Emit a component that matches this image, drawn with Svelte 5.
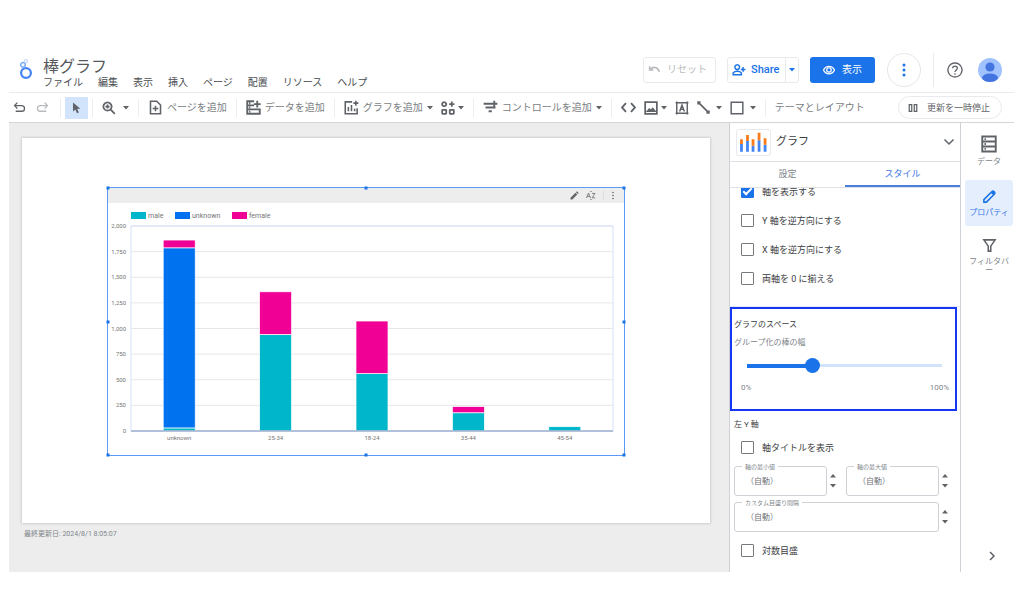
<script lang="ts">
    // stroke icons on a 24x24 grid
    const icons: Record<string, string> = {
        undo: 'M8 3 L3 8.500 L8 14 M3 8.500 H16 A5 5 0 0 1 16 19 H5',
        redo: 'M16 3 L21 8.500 L16 14 M21 8.500 H8 A5 5 0 0 0 8 19 H19',
        reset: 'M3 6 V13 H10 M4 12 C9 6 18 7 21 16',
        zoom: 'M9.500 2.500 A7 7 0 1 1 9.400 2.500 M14.500 14.500 L22 22 M9.500 6 V13 M6 9.500 H13',
        page: 'M4 2 H14 L20 8 V22 H4 Z M12 9 V18 M7.500 13.500 H16.500',
        data: 'M13 2 H2 V22 H22 V15 H2 M2 8.500 H13 M18 1 V12 M12.500 6.500 H23.500 M5 5.200 H7 M5 11.800 H7 M5 18.500 H7',
        chart: 'M13 3 H2 V22 H21 V13 M7 18 V11 M12 18 V8 M17 18 V14 M19 1 V9 M15 5 H23',
        widgets: 'M5.500 2 A3.500 3.500 0 1 1 5.400 2 M3 15 H8 Q9 15 9 16 V21 Q9 22 8 22 H3 Q2 22 2 21 V16 Q2 15 3 15 Z M16 15 H21 Q22 15 22 16 V21 Q22 22 21 22 H16 Q15 22 15 21 V16 Q15 15 16 15 Z M18.500 1 V10 M14 5.500 H23',
        control: 'M1 6 H13 M4 12 H20 M9 18 H14 M18 1 V11 M13 6 H23',
        code: 'M8 5 L1.500 12 L8 19 M16 5 L22.500 12 L16 19',
        image: 'M2 2 H22 V22 H2 Z M6 17.500 L9 14 L12 16.500 L15 13 L18.500 17.500 Z',
        text: 'M3 3 H21 V21 H3 Z M8 18 L12 7 L16 18 M9.500 14 H14.500 M1 3 H5 M3 1 V5 M19 3 H23 M21 1 V5 M1 21 H5 M3 19 V23 M19 21 H23 M21 19 V23',
        line: 'M3 3 L21 21 M2 2 H5 V5 H2 Z M19 19 H22 V22 H19 Z',
        rect: 'M2 2 H22 V22 H2 Z',
        share: 'M9 3 A4 4 0 1 1 8.900 3 M2 20 V17 C5 13 13 13 16 17 V20 Z M19 7 V15 M15 11 H23',
        eye: 'M1 12 C6 2 18 2 23 12 C18 22 6 22 1 12 Z M12 7.500 A4.500 4.500 0 1 1 11.900 7.500',
        help: 'M12 1.500 A10.500 10.500 0 1 1 11.900 1.500 M8.500 9.500 C8.500 5 15.500 5 15.500 9.500 C15.500 12 12 12 12 15 M12 17 V19',
        down: 'M3 7 L12 16 L21 7',
        right: 'M8 4 L16 12 L8 20',
        table: 'M3 2 H21 V22 H3 Z M3 8.700 H21 M3 15.300 H21 M6 5.500 H8 M6 12 H8 M6 18.500 H8',
        pen: 'M3 21 V17 L16 4 C18 2 22 6 20 8 L7 21 Z M15 5 L19 9 M17 4 L20 7 M16 6 L19 6',
        filter: 'M3 3 H21 L14 13 V21 H10 V13 Z',
        pause: 'M3 4 H9 V20 H3 Z M15 4 H21 V20 H15 Z',
    };

    const menus = ['ファイル', '編集', '表示', '挿入', 'ページ', '配置', 'リソース', 'ヘルプ'];

    const series = [
        { name: 'male', color: '#00b6cb', x: 23 },
        { name: 'unknown', color: '#0072f0', x: 67 },
        { name: 'female', color: '#f10096', x: 124 },
    ];

    // one value per series, stacked from the bottom
    const rows = [
        { age: 'unknown', values: [30, 1757, 76] },
        { age: '25-34', values: [942, 0, 416] },
        { age: '18-24', values: [560, 0, 513] },
        { age: '35-44', values: [178, 0, 60] },
        { age: '45-54', values: [42, 0, 0] },
    ];
    const ticks = [0, 250, 500, 750, 1000, 1250, 1500, 1750, 2000];

    const left = 23;
    const right = 505;
    const top = 23;
    const bottom = 228;
    const step = (right - left) / rows.length;

    function y(value: number): number {
        return bottom - (value / 2000) * (bottom - top);
    }

    const bars = rows.flatMap((row, i) => {
        let sum = 0;
        return row.values.map((v, s) => {
            sum += v;
            return { x: left + step * (i + 0.5) - 16, y: y(sum), h: y(0) - y(v), color: series[s].color };
        }).filter((bar) => bar.h > 0);
    });

    let axisOptions = $state([
        { label: '軸を表示する', checked: true },
        { label: 'Y 軸を逆方向にする', checked: false },
        { label: 'X 軸を逆方向にする', checked: false },
        { label: '両軸を 0 に揃える', checked: false },
    ]);
    let showTitle = $state(false);
    let logScale = $state(false);
    let barWidth = $state(32);
    let activeTab = $state('スタイル');
</script>

{#snippet icon(name: string, size: number, weight = 2)}
    <svg class="icon" width={size} height={size} viewBox="0 0 24 24" stroke-width={weight} aria-hidden="true">
        <path d={icons[name]} />
    </svg>
{/snippet}

{#snippet caret()}
    <svg class="caret" width="6" height="4" viewBox="0 0 6 4" aria-hidden="true"><path d="M0 0 H6 L3 3.500 Z" /></svg>
{/snippet}

{#snippet field(id: string, label: string)}
    <div class="field-row">
        <div class="field">
            <label for={id}>{label}</label>
            <input {id} type="text" placeholder="（自動）" />
        </div>
        <div class="spinner">
            <button aria-label="増やす"><svg width="6" height="4" viewBox="0 0 6 4"><path d="M0 3.500 L3 0 L6 3.500 Z" /></svg></button>
            <button aria-label="減らす">{@render caret()}</button>
        </div>
    </div>
{/snippet}

<div class="app">
    <header>
        <svg class="logo" width="14" height="22" viewBox="0 0 14 22" aria-hidden="true">
            <circle cx="7" cy="14" r="4.900" fill="none" stroke="#4285f4" stroke-width="2.200" />
            <circle cx="4" cy="5.800" r="2.300" fill="none" stroke="#7baaf7" stroke-width="1.500" />
            <circle cx="7" cy="2.200" r="1.500" fill="none" stroke="#c6dafc" stroke-width="1.200" />
        </svg>
        <div class="heading">
            <h1>棒グラフ</h1>
            <nav>
                {#each menus as menu}
                    <button>{menu}</button>
                {/each}
            </nav>
        </div>
        <div class="actions">
            <button class="outlined reset" disabled>{@render icon('reset', 13, 3)}リセット</button>
            <div class="outlined split">
                <button class="share">{@render icon('share', 14, 2.5)}Share</button>
                <button class="share-more" aria-label="共有オプション">{@render caret()}</button>
            </div>
            <button class="view">{@render icon('eye', 12, 2.5)}表示</button>
            <button class="more" aria-label="その他">
                <svg width="4" height="14" viewBox="0 0 4 14"><circle cx="2" cy="2" r="1.500" /><circle cx="2" cy="7" r="1.500" /><circle cx="2" cy="12" r="1.500" /></svg>
            </button>
            <div class="account">
                <button aria-label="ヘルプ">{@render icon('help', 16)}</button>
                <button aria-label="アカウント">
                    <svg width="24" height="24" viewBox="0 0 24 24">
                        <clipPath id="round"><circle cx="12" cy="12" r="12" /></clipPath>
                        <g clip-path="url(#round)">
                            <rect width="24" height="24" fill="#a0c3ff" />
                            <circle cx="12" cy="9" r="4.600" fill="#4374e0" />
                            <ellipse cx="12" cy="20" rx="8" ry="4.600" fill="#4374e0" />
                        </g>
                    </svg>
                </button>
            </div>
        </div>
    </header>

    <div class="toolbar">
        <div class="group first">
            <button aria-label="元に戻す">{@render icon('undo', 13, 2.5)}</button>
            <button class="faded" aria-label="やり直す">{@render icon('redo', 13, 2.5)}</button>
        </div>
        <div class="group tight">
            <button class="pointer" aria-label="選択">
                <svg width="9" height="12" viewBox="0 0 9 12"><path d="M1 0.500 V9.500 L3.300 7.400 L5 11.200 L6.800 10.400 L5.200 6.800 H8.400 Z" fill="currentColor" /></svg>
            </button>
        </div>
        <div class="group zoom">
            <button aria-label="ズーム">{@render icon('zoom', 14, 3)}{@render caret()}</button>
        </div>
        <div class="group"><button class="label">{@render icon('page', 15, 2.5)}ページを追加</button></div>
        <div class="group"><button class="label">{@render icon('data', 15, 3)}データを追加</button></div>
        <div class="group">
            <button class="label">{@render icon('chart', 15, 2.5)}グラフを追加{@render caret()}</button>
            <button class="pick" aria-label="コミュニティ">{@render icon('widgets', 14, 3)}{@render caret()}</button>
        </div>
        <div class="group"><button class="label">{@render icon('control', 15, 3)}コントロールを追加{@render caret()}</button></div>
        <div class="group">
            <button aria-label="URL の埋め込み">{@render icon('code', 15, 3)}</button>
            <button class="pick" aria-label="画像">{@render icon('image', 14, 3)}{@render caret()}</button>
            <button aria-label="テキスト">{@render icon('text', 14, 2.5)}</button>
            <button class="pick wide" aria-label="線">{@render icon('line', 13, 3)}{@render caret()}</button>
            <button class="pick wide" aria-label="図形">{@render icon('rect', 14, 2.5)}{@render caret()}</button>
        </div>
        <div class="group"><button class="label">テーマとレイアウト</button></div>
        <button class="pause">{@render icon('pause', 10, 3)}更新を一時停止</button>
    </div>

    <main>
        <div class="canvas">
            <div class="sheet">
                <div class="widget">
                    <div class="widget-bar">
                        <svg width="9" height="9" viewBox="0 0 9 9"><path d="M0.500 8.500 V6.700 L5.500 1.700 L7.300 3.500 L2.300 8.500 Z M6 1.200 L7 0.300 L8.700 2 L7.800 3 Z" /></svg>
                        <svg width="10" height="9" viewBox="0 0 10 9" fill="none" stroke="#777" stroke-width="0.900"><path d="M0.500 7 L2.500 2 L4.500 7 M1.200 5.400 H3.800 M6 2.400 H9 L6 6.800 H9.300 M4.200 1 L5 0.200 L5.800 1 M4.200 8 L5 8.800 L5.800 8" /></svg>
                        <i></i>
                        <svg width="4" height="9" viewBox="0 0 4 9"><circle cx="2" cy="1.500" r="0.800" /><circle cx="2" cy="4.500" r="0.800" /><circle cx="2" cy="7.500" r="0.800" /></svg>
                    </div>
                    <svg class="plot" viewBox="0 0 516 252" role="img" aria-label="年齢と性別の棒グラフ">
                        {#each series as s}
                            <rect x={s.x} y="9" width="15" height="7" fill={s.color} />
                            <text class="legend" x={s.x + 17} y="15">{s.name}</text>
                        {/each}
                        {#each ticks as tick}
                            <line x1={left} x2={right} y1={y(tick)} y2={y(tick)} stroke="#e6e6e9" />
                            <text x="18" y={y(tick) + 2} text-anchor="end">{tick.toLocaleString('en-US')}</text>
                        {/each}
                        <rect x={left} y={top} width={right - left} height={bottom - top} fill="none" stroke="#d3e0f8" />
                        {#each bars as bar}
                            <rect x={bar.x} y={bar.y} width="32" height={bar.h} fill={bar.color} stroke="#fff" stroke-width="0.700" />
                        {/each}
                        <line x1={left} x2={right} y1={bottom} y2={bottom} stroke="#a3b2cf" stroke-width="1.300" />
                        {#each rows as row, i}
                            <text x={left + step * (i + 0.5)} y="237" text-anchor="middle">{row.age}</text>
                        {/each}
                    </svg>
                    {#each ['nw', 'n', 'ne', 'w', 'e', 'sw', 's', 'se'] as pos}
                        <span class="handle {pos}"></span>
                    {/each}
                </div>
            </div>
            <p class="updated">最終更新日: 2024/8/1 8:05:07</p>
        </div>

        <section class="panel">
            <div class="panel-head">
                <svg class="thumb" width="35" height="27" viewBox="0 0 35 27" aria-hidden="true">
                    <path d="M4.500 23.500 V15 M11 23.500 V12 M17 23.500 V17 M23.500 23.500 V11 M30 23.500 V16" stroke="#4285f4" stroke-width="3" />
                    <path d="M4.500 15 V10 M11 12 V5.500 M17 17 V10 M23.500 11 V3 M30 16 V9" stroke="#fa7b17" stroke-width="3" />
                </svg>
                <h2>グラフ</h2>
                <button aria-label="グラフの種類">{@render icon('down', 12, 3)}</button>
            </div>
            <div class="tabs">
                {#each ['設定', 'スタイル'] as tab}
                    <button class:active={activeTab === tab} onclick={() => (activeTab = tab)}>{tab}</button>
                {/each}
            </div>
            <div class="scroll">
                <div class="options">
                    {#each axisOptions as option}
                        <label class="check"><input type="checkbox" bind:checked={option.checked} />{option.label}</label>
                    {/each}
                </div>
                <div class="spacing">
                    <h3>グラフのスペース</h3>
                    <label for="bar-width">グループ化の棒の幅</label>
                    <input id="bar-width" type="range" min="0" max="100" bind:value={barWidth} style="--fill: {barWidth}%" />
                    <div class="range"><span>0%</span><span>100%</span></div>
                </div>
                <div class="left-axis">
                    <h3>左 Y 軸</h3>
                    <label class="check"><input type="checkbox" bind:checked={showTitle} />軸タイトルを表示</label>
                    <div class="pair">
                        {@render field('axis-min', '軸の最小値')}
                        {@render field('axis-max', '軸の最大値')}
                    </div>
                    {@render field('axis-step', 'カスタム目盛り間隔')}
                    <label class="check last"><input type="checkbox" bind:checked={logScale} />対数目盛</label>
                </div>
            </div>
        </section>

        <aside>
            <button>{@render icon('table', 18, 2.5)}データ</button>
            <button class="selected">{@render icon('pen', 15, 2.5)}プロパティ</button>
            <button>{@render icon('filter', 15, 2.5)}フィルタバー</button>
            <button class="collapse" aria-label="折りたたむ">{@render icon('right', 12, 3)}</button>
        </aside>
    </main>
</div>

<style>
    :global(body) {
        margin: 0;
        background: #fff;
    }

    .app {
        box-sizing: border-box;
        height: 100vh;
        min-height: 560px;
        padding: 45px 10px 42px 9px;
        display: flex;
        flex-direction: column;
        font-family: Roboto, "Noto Sans CJK JP", sans-serif;
        font-size: 10px;
        line-height: 12px;
        color: #5f6368;
    }

    h1, h2, h3, p {
        margin: 0;
        font-weight: 400;
    }

    button {
        display: flex;
        align-items: center;
        padding: 0;
        border: 0;
        background: none;
        font: inherit;
        color: inherit;
        white-space: nowrap;
        cursor: pointer;
    }

    svg {
        flex: none;
        display: block;
    }

    .icon {
        fill: none;
        stroke: currentColor;
    }

    .caret, .spinner svg {
        fill: currentColor;
    }

    header {
        display: flex;
        height: 48px;
        box-sizing: border-box;
        border-bottom: 1px solid #e8eaed;
    }

    .logo {
        margin: 14px 10px 0;
    }

    .heading {
        padding-top: 12px;
    }

    h1 {
        font-size: 16px;
        line-height: 20px;
        color: #55585c;
    }

    nav {
        display: flex;
        gap: 15px;
        color: #4a4d51;
    }

    .actions {
        display: flex;
        align-items: center;
        margin-left: auto;
        padding: 2px 12px 0 0;
    }

    .outlined {
        box-sizing: border-box;
        height: 26px;
        border: 1px solid #e8eaed;
        border-radius: 3px;
    }

    .reset {
        width: 73px;
        gap: 6px;
        padding-left: 4px;
        color: #b8babd;
    }

    .split {
        display: flex;
        margin: 0 11px;
        color: #1a73e8;
    }

    .share {
        width: 57px;
        gap: 5px;
        padding-left: 4px;
        font-weight: 500;
        font-size: 11px;
    }

    .share-more {
        width: 13px;
        justify-content: center;
        border-left: 1px solid #e8eaed;
        box-sizing: border-box;
    }

    .view {
        height: 26px;
        width: 65px;
        justify-content: center;
        gap: 7px;
        border-radius: 3px;
        background: #1a73e8;
        color: #fff;
    }

    .more {
        width: 34px;
        height: 34px;
        margin: 0 12px;
        justify-content: center;
        border: 1px solid #e4e6e9;
        border-radius: 50%;
        fill: #1a73e8;
        box-sizing: border-box;
    }

    .account {
        display: flex;
        gap: 15px;
        height: 34px;
        padding-left: 13px;
        border-left: 1px solid #e8eaed;
    }

    .toolbar {
        display: flex;
        align-items: center;
        height: 29px;
    }

    .group {
        display: flex;
        align-items: center;
        gap: 8px;
        height: 18px;
        padding: 0 9px;
        border-left: 1px solid #ebedef;
    }

    .group.first {
        gap: 10px;
        padding: 0 11px 0 4px;
        border-left: 0;
    }

    .group.tight {
        padding: 0 4px;
    }

    .group.zoom button {
        gap: 7px;
    }

    .group .label {
        gap: 4px;
        color: #7a7e82;
    }

    .label svg {
        color: #5f6368;
    }

    .pick {
        gap: 3px;
    }

    .pick.wide {
        gap: 6px;
    }

    .group .faded {
        color: #b8babd;
    }

    .pointer {
        width: 23px;
        height: 22px;
        justify-content: center;
        background: #d2e3fc;
    }

    .pause {
        height: 23px;
        margin: 0 12px 0 auto;
        padding: 0 11px 0 9px;
        gap: 9px;
        border: 1px solid #e8eaed;
        border-radius: 12px;
        font-size: 9px;
        box-sizing: border-box;
    }

    main {
        display: flex;
        flex: 1;
        min-height: 0;
        border-top: 1px solid #d4d5d8;
    }

    .canvas {
        flex: 1;
        min-width: 0;
        padding: 15px 19px 0 13px;
        background: #ededed;
    }

    .sheet {
        padding: 49px 85px 67px;
        background: #fff;
        box-shadow: 0 0 2px 1px rgba(0, 0, 0, 0.12);
    }

    .widget {
        position: relative;
        border: 1px solid #5c9bf5;
    }

    .widget-bar {
        display: flex;
        align-items: center;
        justify-content: flex-end;
        gap: 7px;
        height: 15px;
        padding-right: 9px;
        background: #ededed;
        fill: #666;
    }

    .widget-bar i {
        width: 1px;
        height: 9px;
        background: #ddd;
    }

    .plot {
        width: 100%;
        font-size: 6px;
        fill: #757575;
    }

    .legend {
        font-size: 7px;
    }

    .handle {
        position: absolute;
        width: 3px;
        height: 3px;
        background: #1a73e8;
        transform: translate(-50%, -50%);
        left: 50%;
        top: 50%;
    }

    .nw, .n, .ne { top: 0; }
    .sw, .s, .se { top: 100%; }
    .nw, .w, .sw { left: 0; }
    .ne, .e, .se { left: 100%; }

    .updated {
        padding: 5px 2px;
        font-size: 7px;
        color: #80868b;
    }

    .panel {
        display: flex;
        flex-direction: column;
        width: 230px;
        border: solid #cfd1d6;
        border-width: 0 1px;
    }

    .panel-head {
        display: flex;
        align-items: center;
        height: 38px;
        padding: 0 5px 0 6px;
        border-bottom: 1px solid #e0e2e5;
    }

    .thumb {
        border: 1px solid #e8eaed;
        border-radius: 3px;
        box-sizing: border-box;
    }

    h2 {
        margin: 0 auto 0 5px;
        font-size: 11px;
        color: #3c4043;
    }

    .tabs {
        display: flex;
        flex: none;
        height: 26px;
        box-sizing: border-box;
        border-bottom: 1px solid #e0e2e5;
    }

    .tabs button {
        flex: 1;
        justify-content: center;
        height: 25px;
        box-sizing: border-box;
        border-bottom: 2px solid transparent;
        font-size: 9px;
        color: #80868b;
    }

    .tabs .active {
        border-color: #4a7fe0;
        color: #3b78e7;
    }

    .scroll {
        flex: 1;
        min-height: 0;
        overflow: hidden;
    }

    /* the list is scrolled a little, its first row is cut by the tabs */
    .options {
        margin-top: -11px;
        padding-bottom: 13px;
        border-bottom: 1px solid #e8eaed;
    }

    .check {
        display: flex;
        align-items: center;
        gap: 8px;
        height: 29px;
        padding-left: 11px;
        font-size: 9px;
        color: #3c4043;
    }

    .check input {
        appearance: none;
        display: grid;
        place-content: center;
        box-sizing: border-box;
        width: 13px;
        height: 13px;
        margin: 0;
        border: 1px solid #757a7f;
        border-radius: 1px;
    }

    .check input:checked {
        border-color: #1a73e8;
        background: #1a73e8;
    }

    .check input:checked::after {
        content: "";
        width: 7px;
        height: 3px;
        border: solid #fff;
        border-width: 0 0 2px 2px;
        transform: translateY(-1px) rotate(-45deg);
    }

    .spacing {
        display: flex;
        flex-direction: column;
        margin: 0 3px 0 0;
        padding: 10px 6px 15px 2px;
        border: 2px solid #1437f5;
        font-size: 8px;
        color: #80868b;
    }

    h3 {
        font-size: 8px;
        font-weight: 400;
        color: #3c4043;
    }

    .spacing label {
        margin-top: 6px;
    }

    .spacing input {
        appearance: none;
        height: 15px;
        margin: 9px 7px 9px 13px;
        background:
            linear-gradient(#1a73e8, #1a73e8) left center / var(--fill) 4px no-repeat,
            linear-gradient(#d2e3fc, #d2e3fc) left center / 100% 3px no-repeat;
        border-radius: 2px;
    }

    .spacing input::-webkit-slider-thumb {
        appearance: none;
        width: 15px;
        height: 15px;
        border-radius: 50%;
        background: #1a73e8;
    }

    .range {
        display: flex;
        justify-content: space-between;
        padding-left: 7px;
    }

    .left-axis {
        padding: 8px 12px 0 4px;
    }

    .left-axis .check {
        padding-left: 7px;
        margin-top: 2px;
    }

    .left-axis .last {
        margin-top: 4px;
    }

    .pair {
        display: flex;
        gap: 10px;
        padding: 4px 0 6px;
    }

    .field-row {
        display: flex;
        flex: 1;
        gap: 3px;
    }

    .field {
        position: relative;
        flex: 1;
    }

    .field label {
        position: absolute;
        top: -3px;
        left: 8px;
        padding: 0 3px;
        background: #fff;
        font-size: 6px;
        line-height: 8px;
        color: #80868b;
    }

    .field input {
        box-sizing: border-box;
        width: 100%;
        height: 30px;
        padding: 0 11px;
        border: 1px solid #cfd1d6;
        border-radius: 3px;
        font: 8px Roboto, "Noto Sans CJK JP", sans-serif;
        display: block;
    }

    .field input::placeholder {
        color: #6f7377;
    }

    .spinner {
        display: flex;
        flex-direction: column;
        justify-content: center;
        gap: 6px;
        width: 6px;
    }

    aside {
        display: flex;
        flex-direction: column;
        gap: 7px;
        width: 48px;
        padding: 4px 1px 10px 4px;
        font-size: 8px;
        line-height: 9px;
        color: #80868b;
    }

    aside button {
        flex-direction: column;
        justify-content: center;
        gap: 4px;
        min-height: 46px;
        padding: 0 3px;
        white-space: normal;
        word-break: break-all;
    }

    aside button .icon {
        color: #5f6368;
    }

    aside .selected {
        border-radius: 3px;
        background: #e4eefd;
        color: #3b78e7;
    }

    aside .selected .icon {
        color: #1a73e8;
    }

    aside .collapse {
        min-height: 12px;
        margin: auto 0 0 6px;
    }
</style>
